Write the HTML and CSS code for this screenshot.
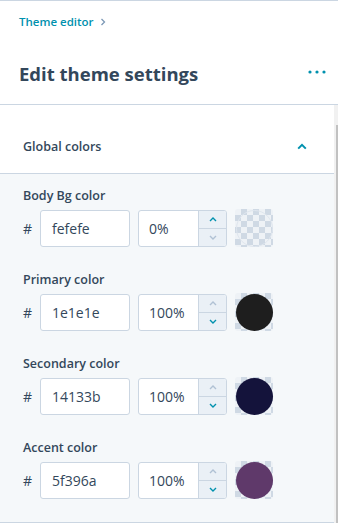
FILE: index.html
```html
<!DOCTYPE html>
<html>
<head>
<meta charset="utf-8">
<link rel="stylesheet" href="styles.css">
</head>
<body>
<div class="page">
  <header class="top">
    <div class="crumb"><span>Theme editor</span>
      <svg class="crumb-chev" width="6" height="8" viewBox="0 0 6 8"><path d="M1.5 1 L4.5 4 L1.5 7" fill="none" stroke="#7c98b6" stroke-width="1.3"/></svg>
    </div>
    <div class="title-row">
      <h1 class="title">Edit theme settings</h1>
      <svg class="dots" width="18" height="4" viewBox="0 0 18 4"><circle cx="2" cy="2" r="1.6" fill="#0091ae"/><circle cx="9" cy="2" r="1.6" fill="#0091ae"/><circle cx="16" cy="2" r="1.6" fill="#0091ae"/></svg>
    </div>
  </header>
  <div class="scroll">
    <div class="content">
      <div class="section-head">
        <span>Global colors</span>
        <svg width="10" height="7" viewBox="0 0 10 7"><path d="M1.2 5.6 L5 1.8 L8.8 5.6" fill="none" stroke="#0091ae" stroke-width="2"/></svg>
      </div>
      <div class="panel">
        <div class="field">
          <div class="label">Body Bg color</div>
          <div class="row">
            <span class="hash">#</span>
            <div class="input hex">fefefe</div>
            <div class="input pct"><span class="pct-val">0%</span>
              <div class="stepper">
                <div class="step"><svg width="8" height="5" viewBox="0 0 8 5"><path d="M1 4 L4 1 L7 4" fill="none" stroke="#0091ae" stroke-width="1.4"/></svg></div>
                <div class="step"><svg width="8" height="5" viewBox="0 0 8 5"><path d="M1 1 L4 4 L7 1" fill="none" stroke="#b0c1d4" stroke-width="1.4"/></svg></div>
              </div>
            </div>
            <div class="swatch"><div class="dot dot-empty"></div></div>
          </div>
        </div>
        <div class="field">
          <div class="label">Primary color</div>
          <div class="row">
            <span class="hash">#</span>
            <div class="input hex">1e1e1e</div>
            <div class="input pct"><span class="pct-val">100%</span>
              <div class="stepper">
                <div class="step"><svg width="8" height="5" viewBox="0 0 8 5"><path d="M1 4 L4 1 L7 4" fill="none" stroke="#b0c1d4" stroke-width="1.4"/></svg></div>
                <div class="step"><svg width="8" height="5" viewBox="0 0 8 5"><path d="M1 1 L4 4 L7 1" fill="none" stroke="#0091ae" stroke-width="1.4"/></svg></div>
              </div>
            </div>
            <div class="swatch"><div class="dot" style="background:#1e1e1e"></div></div>
          </div>
        </div>
        <div class="field">
          <div class="label">Secondary color</div>
          <div class="row">
            <span class="hash">#</span>
            <div class="input hex">14133b</div>
            <div class="input pct"><span class="pct-val">100%</span>
              <div class="stepper">
                <div class="step"><svg width="8" height="5" viewBox="0 0 8 5"><path d="M1 4 L4 1 L7 4" fill="none" stroke="#b0c1d4" stroke-width="1.4"/></svg></div>
                <div class="step"><svg width="8" height="5" viewBox="0 0 8 5"><path d="M1 1 L4 4 L7 1" fill="none" stroke="#0091ae" stroke-width="1.4"/></svg></div>
              </div>
            </div>
            <div class="swatch"><div class="dot" style="background:#14133b"></div></div>
          </div>
        </div>
        <div class="field">
          <div class="label">Accent color</div>
          <div class="row">
            <span class="hash">#</span>
            <div class="input hex">5f396a</div>
            <div class="input pct"><span class="pct-val">100%</span>
              <div class="stepper">
                <div class="step"><svg width="8" height="5" viewBox="0 0 8 5"><path d="M1 4 L4 1 L7 4" fill="none" stroke="#b0c1d4" stroke-width="1.4"/></svg></div>
                <div class="step"><svg width="8" height="5" viewBox="0 0 8 5"><path d="M1 1 L4 4 L7 1" fill="none" stroke="#0091ae" stroke-width="1.4"/></svg></div>
              </div>
            </div>
            <div class="swatch"><div class="dot" style="background:#5f396a"></div></div>
          </div>
        </div>
      </div>
    </div>
    <div class="scrollbar"><div class="thumb"></div></div>
  </div>
</div>
</body>
</html>
```

FILE: styles.css
```css
* { box-sizing: border-box; }
html, body { margin: 0; padding: 0; background: #fff; }
body {
  font-family: "Open Sans", "Lato", sans-serif;
  color: #33475b;
  width: 338px;
  height: 523px;
  overflow: hidden;
}
.page { display: flex; flex-direction: column; height: 523px; }
.top {
  border-top: 1px solid #cbd6e2;
  border-bottom: 1px solid #cbd6e2;
  height: 105px;
  padding: 0 12px 0 19px;
  display: flex;
  flex-direction: column;
}
.crumb {
  margin-top: 12px;
  height: 17px;
  display: flex;
  align-items: center;
  gap: 6px;
  color: #0091ae;
  font-weight: 600;
  font-size: 11.5px;
}
.crumb-chev { margin-top: 1px; }
.title-row {
  margin-top: 33px;
  display: flex;
  align-items: center;
  justify-content: space-between;
}
.title {
  margin: 0;
  font-size: 18.5px;
  line-height: 22px;
  font-weight: 700;
  color: #33475b;
}
.dots { margin-top: -4px; }
.scroll { flex: 1; display: flex; min-height: 0; }
.content { flex: 1; display: flex; flex-direction: column; }
.section-head {
  height: 69px;
  padding: 14px 27px 0 23px;
  display: flex;
  align-items: center;
  justify-content: space-between;
  font-weight: 600;
  font-size: 12.5px;
  border-bottom: 1px solid #cbd6e2;
  background: #fff;
}
.panel {
  background: #f5f8fa;
  padding: 14px 0 0 23px;
  border-bottom: 1px solid #cbd6e2;
  flex: 1;
  display: flex;
  flex-direction: column;
  gap: 25px;
}
.label {
  font-weight: 600;
  font-size: 12.5px;
  line-height: 16px;
  margin-bottom: 5px;
}
.row { display: flex; align-items: center; }
.hash { width: 17px; font-size: 14px; color: #33475b; }
.input {
  height: 37px;
  background: #fff;
  border: 1px solid #cbd6e2;
  border-radius: 3px;
  font-size: 14px;
  color: #33475b;
  display: flex;
  align-items: center;
}
.hex { width: 90px; padding-left: 11px; margin-right: 8px; }
.pct { width: 89px; padding-left: 10px; overflow: hidden; }
.pct-val { flex: 1; }
.stepper {
  width: 28px;
  height: 100%;
  display: flex;
  flex-direction: column;
  border-left: 1px solid #cbd6e2;
  background: #eaf0f6;
}
.step { flex: 1; display: flex; align-items: center; justify-content: center; }
.step + .step { border-top: 1px solid #cbd6e2; }
.swatch {
  width: 38px;
  height: 38px;
  margin-left: 8px;
  border-radius: 3px;
  background-color: #eef2f6;
  background-image:
    linear-gradient(45deg, #cfd9e4 25%, transparent 25%, transparent 75%, #cfd9e4 75%),
    linear-gradient(45deg, #cfd9e4 25%, transparent 25%, transparent 75%, #cfd9e4 75%);
  background-size: 12px 12px;
  background-position: 0 0, 6px 6px;
  display: flex;
  align-items: center;
  justify-content: center;
}
.dot { width: 37px; height: 37px; border-radius: 50%; }
.dot-empty { border: 1px solid #dfe6ee; }
.scrollbar {
  width: 4px;
  background: #f1f1f1;
  display: flex;
  justify-content: flex-end;
}
.thumb { width: 2px; margin-top: 20px; background: #c1c1c1; }
```
